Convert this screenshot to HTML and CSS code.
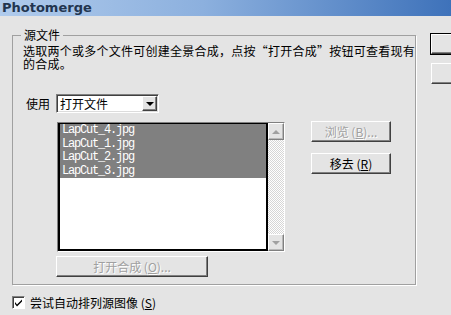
FILE: index.html
```html
<!DOCTYPE html>
<html lang="zh-CN">
<head>
  <meta charset="utf-8">
  <title>Photomerge</title>
  <link rel="stylesheet" href="styles.css">
</head>
<body>
  <div class="dialog">
    <div class="titlebar">Photomerge</div>

    <div class="body">
      <div class="main">
        <fieldset class="group">
          <legend>源文件</legend>
          <p class="desc">选取两个或多个文件可创建全景合成，点按“打开合成”按钮可查看现有<br>的合成。</p>

          <div class="use-row">
            <span class="use-label">使用</span>
            <div class="combo">
              <span class="combo-text">打开文件</span>
              <span class="combo-btn"><span class="arrow-down"></span></span>
            </div>
          </div>

          <div class="files">
            <div class="listbox">
              <div class="list">
                <div class="item">LapCut_4.jpg</div>
                <div class="item">LapCut_1.jpg</div>
                <div class="item">LapCut_2.jpg</div>
                <div class="item">LapCut_3.jpg</div>
              </div>
              <div class="scrollbar">
                <div class="sbtn"><span class="tri-up"></span></div>
                <div class="track"></div>
                <div class="sbtn"><span class="tri-down"></span></div>
              </div>
            </div>

            <div class="side-btns">
              <button class="btn" disabled>浏览 (<u>B</u>)...</button>
              <button class="btn">移去 (<u>R</u>)</button>
            </div>
          </div>

          <button class="btn open-btn" disabled>打开合成 (<u>O</u>)...</button>
        </fieldset>

        <label class="check">
          <span class="checkbox">
            <svg width="9" height="9" viewBox="0 0 9 9"><path d="M1 4 L3 6.5 L8 1.5 L8 3.5 L3 8.5 L1 6 Z" fill="#000"/></svg>
          </span>
          <span class="check-text">尝试自动排列源图像 (<u>S</u>)</span>
        </label>
      </div>

      <div class="actions">
        <button class="btn default"></button>
        <button class="btn"></button>
      </div>
    </div>
  </div>
</body>
</html>
```

FILE: styles.css
```css
body {
  margin: 0;
  background-color: #e4e4e4;
  font-family: "Noto Sans CJK SC", "DejaVu Sans", sans-serif;
  font-size: 12px;
  color: #000;
}

.dialog {
  width: 451px;
  height: 315px;
  overflow: hidden;
}

.titlebar {
  height: 16px;
  line-height: 16px;
  padding-left: 2px;
  font-family: "DejaVu Sans", sans-serif;
  font-size: 13px;
  font-weight: bold;
  color: #22354f;
  background: linear-gradient(to right, #b0cbec, #8cb0de 45%, #3e72ba);
}

.body {
  display: flex;
}

.main {
  width: 413px;
  margin-left: 12px;
}

.group {
  box-sizing: border-box;
  width: 401px;
  margin: 12px 0 0 0;
  padding: 0 0 7px 10px;
  border: 1px solid #a0a0a0;
  box-shadow: 1px 1px 0 #fff;
}

.group legend {
  margin-left: -2px;
  padding: 0 3px;
  height: 14px;
  line-height: 14px;
}

.desc {
  margin: 2px 0 0 0;
  line-height: 13px;
  white-space: nowrap;
  letter-spacing: 0.25px;
}

.use-row {
  display: flex;
  align-items: center;
  margin-top: 24px;
  height: 19px;
}

.use-label {
  margin-left: 3px;
  width: 24px;
  margin-right: 6px;
}

.combo {
  box-sizing: border-box;
  display: flex;
  width: 103px;
  height: 19px;
  background-color: #fff;
  border: 1px solid;
  border-color: #808080 #fff #fff #808080;
  box-shadow: inset 1px 1px 0 #404040, inset -1px -1px 0 #dcdcdc;
}

.combo-text {
  flex: 1;
  padding-left: 3px;
  line-height: 17px;
}

.combo-btn {
  box-sizing: border-box;
  display: flex;
  align-items: center;
  justify-content: center;
  width: 15px;
  height: 15px;
  margin: 1px 1px 0 0;
  background-color: #e4e4e4;
  border: 1px solid;
  border-color: #fff #404040 #404040 #fff;
  box-shadow: inset -1px -1px 0 #808080;
}

.arrow-down {
  width: 0;
  height: 0;
  border-left: 4px solid transparent;
  border-right: 4px solid transparent;
  border-top: 4px solid #000;
}

.files {
  display: flex;
  margin-top: 9px;
  margin-left: 34px;
}

.listbox {
  box-sizing: border-box;
  display: flex;
  width: 228px;
  height: 130px;
  border: 1px solid;
  border-color: #808080 #fff #fff #808080;
}

.list {
  flex: 1;
  background-color: #fff;
  border: 2px solid #000;
  border-top-width: 1px;
}

.item {
  height: 13.5px;
  line-height: 13.5px;
  padding-left: 2px;
  background-color: #808080;
  color: #fff;
  font-family: "Liberation Mono", monospace;
  font-size: 12px;
  letter-spacing: -1.2px;
}

.scrollbar {
  display: flex;
  flex-direction: column;
  width: 16px;
}

.sbtn {
  box-sizing: border-box;
  display: flex;
  align-items: center;
  justify-content: center;
  height: 17px;
  background-color: #e4e4e4;
  border: 1px solid;
  border-color: #fff #808080 #808080 #fff;
  box-shadow: inset -1px -1px 0 #b8b8b8;
}

.tri-up,
.tri-down {
  width: 0;
  height: 0;
  border-left: 4px solid transparent;
  border-right: 4px solid transparent;
}

.tri-up {
  border-bottom: 4px solid #a0a0a0;
}

.tri-down {
  border-top: 4px solid #a0a0a0;
}

.track {
  flex: 1;
  background: repeating-conic-gradient(#fff 0 25%, #d6d6d6 0 50%) 0 0 / 2px 2px;
}

.btn {
  box-sizing: border-box;
  padding: 0;
  font-family: "Noto Sans CJK SC", "DejaVu Sans", sans-serif;
  font-size: 12px;
  color: #000;
  background-color: #e4e4e4;
  border: 1px solid;
  border-color: #fff #404040 #404040 #fff;
  box-shadow: inset -1px -1px 0 #808080;
}

.btn:disabled {
  color: #a0a0a0;
  text-shadow: 1px 1px 0 #fff;
}

.side-btns {
  display: flex;
  flex-direction: column;
  gap: 11px;
  margin-left: 26px;
  margin-top: -1px;
}

.side-btns .btn {
  width: 80px;
  height: 21px;
}

.open-btn {
  display: block;
  width: 152px;
  height: 21px;
  margin: 4px 0 0 33px;
}

.check {
  display: flex;
  align-items: center;
  gap: 5px;
  margin-top: 11px;
  height: 13px;
  line-height: 13px;
}

.checkbox {
  box-sizing: border-box;
  display: flex;
  align-items: center;
  justify-content: center;
  width: 13px;
  height: 13px;
  background-color: #fff;
  border: 1px solid;
  border-color: #808080 #fff #fff #808080;
  box-shadow: inset 1px 1px 0 #404040;
}

.actions {
  display: flex;
  flex-direction: column;
  gap: 9px;
  margin-left: 15px;
  margin-top: 17px;
}

.actions .btn {
  width: 80px;
  height: 21px;
}

.actions .default {
  outline: 1px solid #000;
  outline-offset: 0;
  height: 20px;
  margin-top: 1px;
}
```
